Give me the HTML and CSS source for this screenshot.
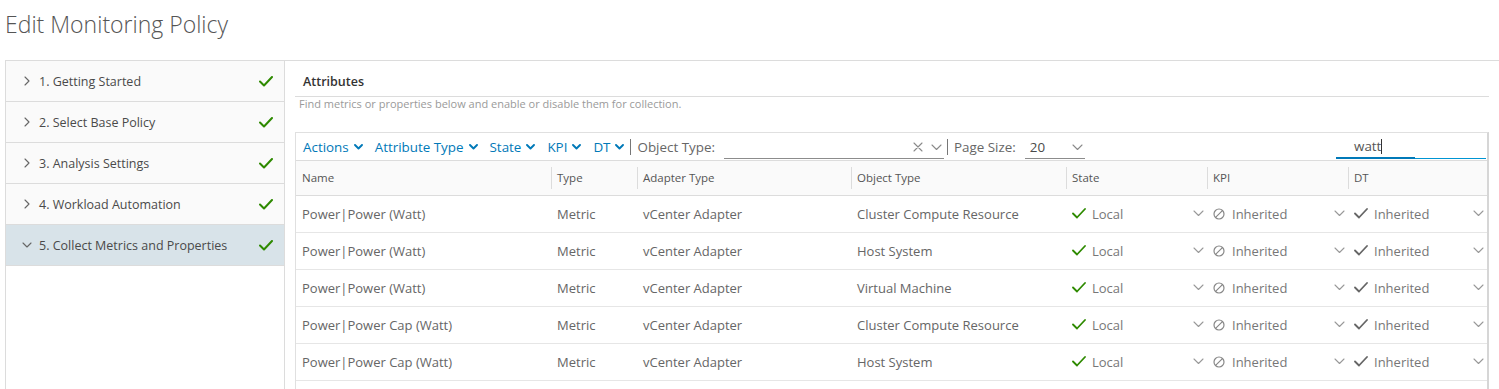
FILE: index.html
```html
<!DOCTYPE html>
<html lang="en">
<head>
    <meta charset="UTF-8">
    <meta name="viewport" content="width=device-width, initial-scale=1.0">
    <title>Edit Monitoring Policy</title>
    <link rel="stylesheet" href="styles.css">
</head>
<body>

    <h1 class="page-title">Edit Monitoring Policy</h1>

    <div class="wizard">
        <div class="steps">
            <div class="step">
                <svg class="caret" width="8" height="10" viewBox="0 0 8 10"><path d="M2 1l4 4-4 4" /></svg>
                <span class="step-label">1. Getting Started</span>
                <svg class="done" width="14" height="11" viewBox="0 0 14 11"><path d="M1 5.5l4 4 8-8.5" /></svg>
            </div>
            <div class="step">
                <svg class="caret" width="8" height="10" viewBox="0 0 8 10"><path d="M2 1l4 4-4 4" /></svg>
                <span class="step-label">2. Select Base Policy</span>
                <svg class="done" width="14" height="11" viewBox="0 0 14 11"><path d="M1 5.5l4 4 8-8.5" /></svg>
            </div>
            <div class="step">
                <svg class="caret" width="8" height="10" viewBox="0 0 8 10"><path d="M2 1l4 4-4 4" /></svg>
                <span class="step-label">3. Analysis Settings</span>
                <svg class="done" width="14" height="11" viewBox="0 0 14 11"><path d="M1 5.5l4 4 8-8.5" /></svg>
            </div>
            <div class="step">
                <svg class="caret" width="8" height="10" viewBox="0 0 8 10"><path d="M2 1l4 4-4 4" /></svg>
                <span class="step-label">4. Workload Automation</span>
                <svg class="done" width="14" height="11" viewBox="0 0 14 11"><path d="M1 5.5l4 4 8-8.5" /></svg>
            </div>
            <div class="step active">
                <svg class="caret" width="10" height="8" viewBox="0 0 10 8"><path d="M1 2l4 4 4-4" /></svg>
                <span class="step-label">5. Collect Metrics and Properties</span>
                <svg class="done" width="14" height="11" viewBox="0 0 14 11"><path d="M1 5.5l4 4 8-8.5" /></svg>
            </div>
        </div>

        <div class="content">
            <div class="section-title">Attributes</div>
            <div class="section-desc">Find metrics or properties below and enable or disable them for collection.</div>

            <div class="grid">
                <div class="toolbar">
                    <span class="menu">Actions <svg width="9" height="6" viewBox="0 0 9 6"><path d="M1 1l3.5 3.5 3.5-3.5" /></svg></span>
                    <span class="menu">Attribute Type <svg width="9" height="6" viewBox="0 0 9 6"><path d="M1 1l3.5 3.5 3.5-3.5" /></svg></span>
                    <span class="menu">State <svg width="9" height="6" viewBox="0 0 9 6"><path d="M1 1l3.5 3.5 3.5-3.5" /></svg></span>
                    <span class="menu">KPI <svg width="9" height="6" viewBox="0 0 9 6"><path d="M1 1l3.5 3.5 3.5-3.5" /></svg></span>
                    <span class="menu last">DT <svg width="9" height="6" viewBox="0 0 9 6"><path d="M1 1l3.5 3.5 3.5-3.5" /></svg></span>
                    <span class="sep"></span>
                    <span class="field-label">Object Type:</span>
                    <span class="combo object-type">
                        <svg class="clear" width="10" height="10" viewBox="0 0 10 10"><path d="M1 1l8 8M9 1l-8 8" /></svg>
                        <svg class="chev" width="11" height="7" viewBox="0 0 11 7"><path d="M1 1l4.5 4.5 4.5-4.5" /></svg>
                    </span>
                    <span class="sep"></span>
                    <span class="field-label">Page Size:</span>
                    <span class="combo page-size">
                        <span class="combo-value">20</span>
                        <svg class="chev" width="11" height="7" viewBox="0 0 11 7"><path d="M1 1l4.5 4.5 4.5-4.5" /></svg>
                    </span>
                    <span class="search">watt<span class="cursor"></span></span>
                </div>

                <table class="attr-table">
                    <colgroup>
                        <col style="width:255px">
                        <col style="width:86px">
                        <col style="width:214px">
                        <col style="width:215px">
                        <col style="width:141px">
                        <col style="width:141px">
                        <col>
                    </colgroup>
                    <thead>
                        <tr>
                            <th>Name</th>
                            <th>Type</th>
                            <th>Adapter Type</th>
                            <th>Object Type</th>
                            <th>State</th>
                            <th>KPI</th>
                            <th>DT</th>
                        </tr>
                    </thead>
                    <tbody id="rows"></tbody>
                </table>
            </div>
        </div>
    </div>

    <script>
        const rows = [
            ['Power|Power (Watt)', 'Cluster Compute Resource'],
            ['Power|Power (Watt)', 'Host System'],
            ['Power|Power (Watt)', 'Virtual Machine'],
            ['Power|Power Cap (Watt)', 'Cluster Compute Resource'],
            ['Power|Power Cap (Watt)', 'Host System']
        ];

        const chev = '<svg class="chev" width="11" height="7" viewBox="0 0 11 7"><path d="M1 1l4.5 4.5 4.5-4.5" /></svg>';
        const check = '<svg class="ico" width="14" height="11" viewBox="0 0 14 11"><path d="M1 5.5l4 4 8-8.5" /></svg>';
        const ban = '<svg class="ico ban" width="12" height="12" viewBox="0 0 12 12"><circle cx="6" cy="6" r="5" /><path d="M2.6 9.4l6.8-6.8" /></svg>';

        const tbody = document.getElementById('rows');
        rows.forEach(r => {
            const tr = document.createElement('tr');
            tr.innerHTML =
                '<td>' + r[0] + '</td>' +
                '<td>Metric</td>' +
                '<td>vCenter Adapter</td>' +
                '<td>' + r[1] + '</td>' +
                '<td><div class="pick state-local">' + check + '<span>Local</span>' + chev + '</div></td>' +
                '<td><div class="pick">' + ban + '<span>Inherited</span>' + chev + '</div></td>' +
                '<td><div class="pick state-dt">' + check + '<span>Inherited</span>' + chev + '</div></td>';
            tbody.appendChild(tr);
        });

        // next row is below the fold, only its empty top shows
        const filler = document.createElement('tr');
        filler.className = 'filler';
        filler.innerHTML = '<td colspan="7"></td>';
        tbody.appendChild(filler);
    </script>

</body>
</html>
```

FILE: styles.css
```css
* {
    margin: 0;
    padding: 0;
    box-sizing: border-box;
}
body {
    font-family: "Open Sans", Arial, sans-serif;
    color: #565656;
    background-color: white;
    overflow: hidden;
    height: 389px;
}
svg path,
svg circle {
    fill: none;
    stroke-linecap: round;
    stroke-linejoin: round;
}
.page-title {
    font-size: 23px;
    font-weight: 300;
    color: #555;
    height: 60px;
    line-height: 48px;
    padding-left: 5px;
}
.wizard {
    display: flex;
    margin-left: 5px;
    border-top: 1px solid #dcdcdc;
    height: 329px;
}
.steps {
    width: 280px;
    flex-shrink: 0;
    border-left: 1px solid #dcdcdc;
    border-right: 1px solid #dcdcdc;
}
.step {
    display: flex;
    align-items: center;
    height: 41px;
    background-color: #fafafa;
    border-bottom: 1px solid #dcdcdc;
    padding-left: 16px;
    padding-right: 11px;
    font-size: 12.5px;
    color: #4a4a4a;
}
.step.active {
    background-color: #d8e3e9;
}
.step .caret {
    width: 10px;
    margin-right: 7px;
}
.step .caret path {
    stroke: #666;
    stroke-width: 1.1;
}
.step-label {
    flex: 1;
}
.step .done path {
    stroke: #2e8a00;
    stroke-width: 2;
}
.content {
    flex: 1;
    padding-left: 10px;
    padding-right: 10px;
    overflow: hidden;
}
.section-title {
    font-size: 12.5px;
    font-weight: 600;
    color: #333;
    padding: 12px 8px 6px;
    border-bottom: 1px solid #dcdcdc;
    line-height: 17px;
}
.section-desc {
    font-size: 11px;
    color: #9a9a9a;
    padding: 0 4px;
    line-height: 14px;
}
.grid {
    margin-top: 21px;
    border: 1px solid #e0e0e0;
    border-right: 2px solid #d6d6d6;
}
.toolbar {
    display: flex;
    align-items: center;
    height: 28px;
    padding-left: 7px;
    font-size: 13.4px;
    border-bottom: 1px solid #dcdcdc;
    white-space: nowrap;
}
.menu {
    color: #0079b8;
    margin-right: 12px;
    display: flex;
    align-items: center;
}
.menu svg {
    margin-left: 5px;
    margin-top: 1px;
}
.menu svg path {
    stroke: #0079b8;
    stroke-width: 1.9;
}
.menu.last {
    margin-right: 6px;
}
.sep {
    width: 1px;
    height: 16px;
    background-color: #777;
    margin-right: 6px;
}
.field-label {
    color: #666;
    margin-right: 9px;
}
.combo {
    display: flex;
    align-items: center;
    justify-content: flex-end;
    height: 22px;
    border-bottom: 1px solid #8c8c8c;
    margin-top: 2px;
}
.combo .chev path,
.combo .clear path {
    stroke: #8a8a8a;
    stroke-width: 1.1;
}
.object-type {
    width: 220px;
    margin-right: 3px;
}
.object-type .clear {
    margin-right: 8px;
}
.object-type .chev {
    margin-right: 2px;
}
.page-size {
    width: 60px;
    justify-content: space-between;
    padding-left: 5px;
    padding-right: 2px;
}
.combo-value {
    color: #4a4a4a;
}
.search {
    margin-left: auto;
    margin-right: 1px;
    width: 150px;
    height: 22px;
    margin-top: 2px;
    padding-left: 18px;
    color: #565656;
    border-bottom: 1px solid #0095d3;
    position: relative;
    line-height: 18px;
}
.search::after {
    content: "";
    position: absolute;
    left: 0;
    bottom: -1px;
    width: 79px;
    height: 2px;
    background-color: #0079b8;
}
.cursor {
    display: inline-block;
    width: 1px;
    height: 15px;
    background-color: #333;
    vertical-align: -3px;
}
.attr-table {
    width: 100%;
    border-collapse: collapse;
    table-layout: fixed;
    font-size: 13px;
}
.attr-table th {
    background-color: #fafafa;
    height: 34px;
    text-align: left;
    font-weight: 500;
    font-size: 11.5px;
    color: #555;
    padding-left: 6px;
    border-bottom: 1px solid #dcdcdc;
    position: relative;
}
.attr-table th + th::before {
    content: "";
    position: absolute;
    left: 0;
    top: 6px;
    bottom: 6px;
    width: 1px;
    background-color: #dcdcdc;
}
.attr-table td {
    height: 37px;
    padding-left: 6px;
    border-bottom: 1px solid #e6e6e6;
    color: #666;
    white-space: nowrap;
}
.attr-table .filler td {
    border-bottom: none;
}
.pick {
    display: flex;
    align-items: center;
    padding-right: 3px;
}
.pick span {
    flex: 1;
    color: #777;
}
.pick .ico {
    margin-right: 6px;
}
.pick .ico path {
    stroke: #666;
    stroke-width: 1.8;
}
.state-local .ico path {
    stroke: #2e8a00;
}
.pick .ban {
    margin-right: 7px;
}
.pick .ban circle,
.pick .ban path {
    stroke: #888;
    stroke-width: 1.2;
}
.pick .chev path {
    stroke: #999;
    stroke-width: 1.1;
}
```
